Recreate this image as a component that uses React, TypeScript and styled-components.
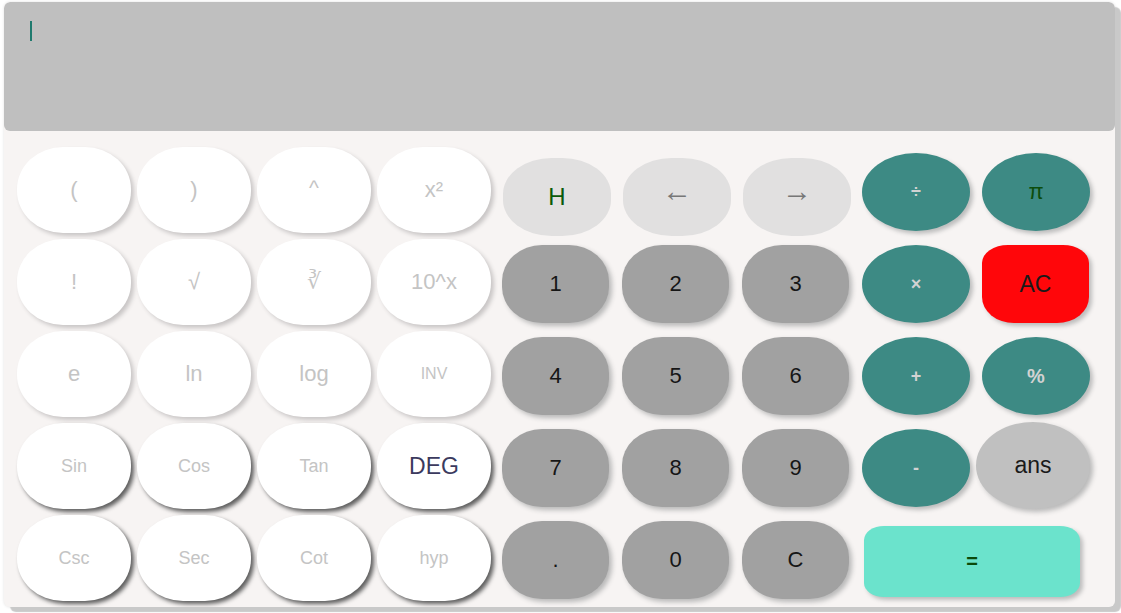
import React from "react";
import styled, { createGlobalStyle, css } from "styled-components";

const Global = createGlobalStyle`
  html, body { margin: 0; padding: 0; background: #ffffff; }
  body { font-family: "Liberation Sans", Arial, sans-serif; }
`;

const Page = styled.div`
  padding: 2px 0 0 4px;
  width: 1121px;
  height: 613px;
  box-sizing: border-box;
  overflow: hidden;
`;

const Calculator = styled.div`
  width: 1111px;
  height: 605px;
  border-radius: 6px;
  overflow: hidden;
  background: #f7f4f3;
  box-shadow: 6px 5px 1px #c9c9c9, 0 0 3px rgba(0, 0, 0, 0.12);
  display: flex;
  flex-direction: column;
`;

const Display = styled.div`
  height: 129px;
  background: #bfbfbf;
  padding: 19px 0 0 26px;
  box-sizing: border-box;
  border-radius: 6px;
`;

const Caret = styled.div`
  width: 2px;
  height: 20px;
  background: #1f7a6e;
`;

const Keypad = styled.div`
  display: grid;
  grid-template-columns: repeat(9, 120px);
  grid-auto-rows: 92px;
  align-items: start;
  padding: 13px 0 0 7px;
`;

type Kind = "fn" | "fnDark" | "nav" | "digit" | "op" | "clear" | "ans" | "equals";

const kindStyles: Record<Kind, ReturnType<typeof css>> = {
  fn: css`
    width: 114px;
    height: 86px;
    margin: 3px 0 0 6px;
    background: #ffffff;
    border-radius: 46px / 42px;
    box-shadow: 3px 3px 4px #c9c6c6;
    color: #c4c4c4;
  `,
  fnDark: css`
    width: 114px;
    height: 86px;
    margin: 3px 0 0 6px;
    background: #ffffff;
    border-radius: 46px / 42px;
    box-shadow: 3px 3px 4px #5e5e5e;
    color: #c4c4c4;
  `,
  nav: css`
    width: 108px;
    height: 78px;
    margin: 14px 0 0 12px;
    background: #e1e0e0;
    border-radius: 45% / 46%;
    color: #777777;
  `,
  digit: css`
    width: 107px;
    height: 78px;
    margin: 9px 0 0 11px;
    background: #a1a1a1;
    border-radius: 40px / 36px;
    box-shadow: 3px 3px 5px #b9b9b9;
    color: #161616;
  `,
  op: css`
    width: 108px;
    height: 78px;
    margin: 9px 0 0 11px;
    background: #3d8a84;
    border-radius: 50%;
    box-shadow: 3px 3px 4px #bdbdbd;
    color: #d2d2d2;
  `,
  clear: css`
    width: 107px;
    height: 78px;
    margin: 9px 0 0 11px;
    background: #ff060a;
    border-radius: 26px 26px 32px 32px / 18px 18px 26px 26px;
    box-shadow: 3px 3px 4px #bdbdbd;
    color: #1a1a1a;
  `,
  ans: css`
    width: 114px;
    height: 87px;
    margin: 2px 0 0 5px;
    background: #c0c0c0;
    border-radius: 50%;
    box-shadow: 3px 3px 5px #b9b9b9;
    color: #1a1a1a;
  `,
  equals: css`
    grid-column: span 2;
    width: 216px;
    height: 71px;
    margin: 14px 0 0 13px;
    background: #6be3cc;
    border-radius: 20px / 14px;
    box-shadow: 3px 3px 4px #bdbdbd;
    color: #0b4a0b;
  `,
};

const Key = styled.button<{
  $kind: Kind;
  $size?: number;
  $color?: string;
  $bold?: boolean;
  $lift?: number;
}>`
  display: flex;
  align-items: center;
  justify-content: center;
  border: none;
  padding: 0 0 ${(p) => p.$lift ?? 0}px 0;
  font-family: "Liberation Sans", Arial, sans-serif;
  font-size: ${(p) => p.$size ?? 22}px;
  font-weight: ${(p) => (p.$bold ? 700 : 400)};
  cursor: pointer;
  ${(p) => kindStyles[p.$kind]}
  ${(p) => p.$color && `color: ${p.$color};`}
`;

type KeyDef = {
  label: string;
  kind: Kind;
  size?: number;
  color?: string;
  bold?: boolean;
  lift?: number;
};

const keys: KeyDef[] = [
  { label: "(", kind: "fn" },
  { label: ")", kind: "fn" },
  { label: "^", kind: "fn", size: 21, lift: 4 },
  { label: "x²", kind: "fn" },
  { label: "H", kind: "nav", size: 24, color: "#0b5a0b" },
  { label: "←", kind: "nav", size: 30, lift: 12 },
  { label: "→", kind: "nav", size: 30, lift: 12 },
  { label: "÷", kind: "op", size: 18, bold: true },
  { label: "π", kind: "op", size: 22, color: "#0c4d0c" },

  { label: "!", kind: "fn" },
  { label: "√", kind: "fn" },
  { label: "∛", kind: "fn" },
  { label: "10^x", kind: "fn" },
  { label: "1", kind: "digit" },
  { label: "2", kind: "digit" },
  { label: "3", kind: "digit" },
  { label: "×", kind: "op", size: 18, bold: true },
  { label: "AC", kind: "clear", size: 23 },

  { label: "e", kind: "fn" },
  { label: "ln", kind: "fn" },
  { label: "log", kind: "fn" },
  { label: "INV", kind: "fn", size: 16 },
  { label: "4", kind: "digit" },
  { label: "5", kind: "digit" },
  { label: "6", kind: "digit" },
  { label: "+", kind: "op", size: 18, bold: true },
  { label: "%", kind: "op", size: 20, bold: true },

  { label: "Sin", kind: "fnDark", size: 18 },
  { label: "Cos", kind: "fnDark", size: 18 },
  { label: "Tan", kind: "fnDark", size: 18 },
  { label: "DEG", kind: "fnDark", size: 23, color: "#3b3a5e" },
  { label: "7", kind: "digit" },
  { label: "8", kind: "digit" },
  { label: "9", kind: "digit" },
  { label: "-", kind: "op", size: 18, bold: true },
  { label: "ans", kind: "ans", size: 23 },

  { label: "Csc", kind: "fnDark", size: 18 },
  { label: "Sec", kind: "fnDark", size: 18 },
  { label: "Cot", kind: "fnDark", size: 18 },
  { label: "hyp", kind: "fnDark", size: 18 },
  { label: ".", kind: "digit" },
  { label: "0", kind: "digit" },
  { label: "C", kind: "digit" },
  { label: "=", kind: "equals", size: 20, bold: true },
];

export default function App() {
  return (
    <>
      <Global />
      <Page>
        <Calculator>
          <Display>
            <Caret />
          </Display>
          <Keypad>
            {keys.map((k, i) => (
              <Key
                key={i}
                $kind={k.kind}
                $size={k.size}
                $color={k.color}
                $bold={k.bold}
                $lift={k.lift}
              >
                {k.label}
              </Key>
            ))}
          </Keypad>
        </Calculator>
      </Page>
    </>
  );
}
